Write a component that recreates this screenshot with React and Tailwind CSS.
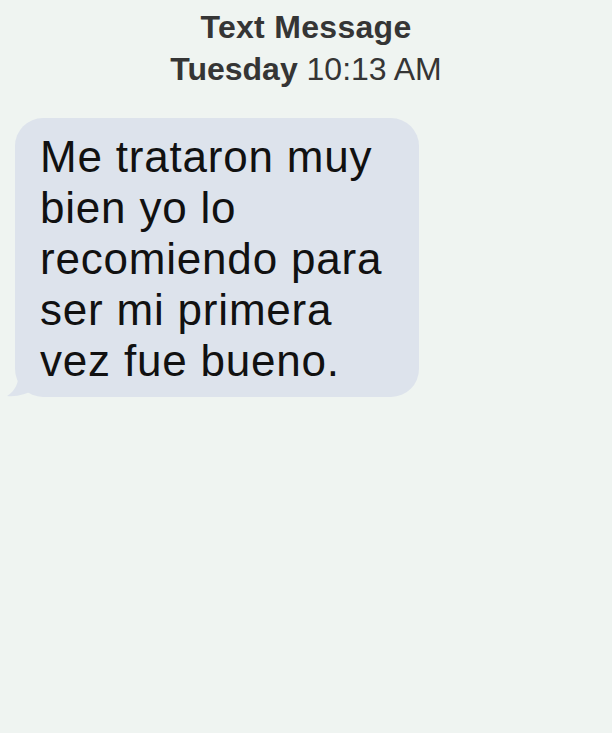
export default function App() {
  return (
    <div
      className="w-[612px] h-[733px] bg-[#eff4f1] overflow-hidden"
      style={{ fontFamily: '"Liberation Sans", Arial, sans-serif' }}
    >
      <div className="pt-[6px] text-center text-[#353535] text-[32px] leading-[42px]">
        <div className="font-semibold tracking-[0.3px]">Text Message</div>
        <div>
          <span className="font-bold">Tuesday</span> 10:13 AM
        </div>
      </div>

      <div className="relative mt-[28px] ml-[15px] w-[404px]">
        <div className="bg-[#dde3ec] rounded-[28px] pl-[25px] pr-[8px] pt-[13px] pb-[11px] text-[#111] text-[44px] leading-[51px] tracking-[0.8px]">
          Me trataron muy
          <br />
          bien yo lo
          <br />
          recomiendo para
          <br />
          ser mi primera
          <br />
          vez fue bueno.
        </div>
        <svg className="absolute -left-[8px] bottom-0" width="30" height="26" viewBox="0 0 30 26">
          <path d="M12 0 C12 12 8 20 0 25 C10 26 20 23 28 18 L28 0 Z" fill="#dde3ec" />
        </svg>
      </div>
    </div>
  );
}
